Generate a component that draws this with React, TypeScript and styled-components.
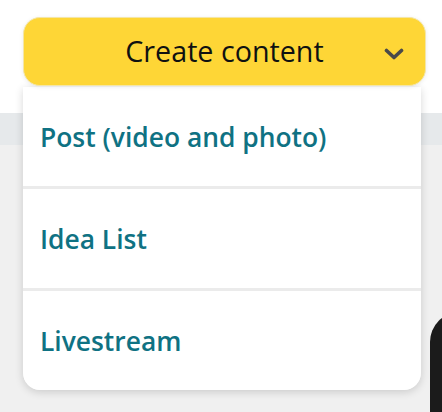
import React from "react";
import styled, { createGlobalStyle } from "styled-components";

const Global = createGlobalStyle`
  html, body { margin: 0; padding: 0; }
  body { background: #f0f0f0; font-family: "Open Sans", "Noto Sans", sans-serif; }
`;

const Page = styled.div`
  position: relative;
  width: 442px;
  height: 412px;
  overflow: hidden;
  background: #f0f0f0;
  display: flex;
  flex-direction: column;
`;

const Header = styled.div`
  height: 113px;
  background: #ffffff;
`;

const Band = styled.div`
  height: 32px;
  background: #e6e9eb;
`;

const Device = styled.div`
  position: absolute;
  left: 430px;
  top: 312px;
  width: 80px;
  height: 200px;
  border-radius: 30px;
  background: #1b1b1b;
`;

const Dropdown = styled.div`
  position: absolute;
  left: 23px;
  top: 17px;
  width: 403px;
  display: flex;
  flex-direction: column;
`;

const Trigger = styled.button`
  box-sizing: border-box;
  height: 69px;
  width: 403px;
  border: 1px solid #f4e6a6;
  border-radius: 17px;
  background: #fed636;
  box-shadow: 0 1px 4px rgba(0, 0, 0, 0.08);
  display: flex;
  align-items: center;
  justify-content: center;
  position: relative;
  padding: 0 0 2px 0;
  font-family: "Open Sans", "Noto Sans", sans-serif;
  font-size: 28.7px;
  font-weight: 400;
  color: #0f1111;
  cursor: pointer;
`;

const Chevron = styled.svg`
  position: absolute;
  right: 21px;
  top: 30px;
`;

const Menu = styled.div`
  margin-top: 1px;
  width: 398px;
  background: #ebebeb;
  border-radius: 0 0 17px 17px;
  box-shadow: 0 2px 8px rgba(0, 0, 0, 0.16);
  display: flex;
  flex-direction: column;
  gap: 3px;
  overflow: hidden;
`;

const Item = styled.div`
  height: 99px;
  background: #ffffff;
  display: flex;
  align-items: center;
  padding-left: 17px;
  font-size: 26.4px;
  font-weight: 600;
  color: #0f7283;
`;

export default function App() {
  return (
    <>
      <Global />
      <Page>
        <Header />
        <Band />
        <Device />
        <Dropdown>
          <Trigger>
            Create content
            <Chevron width="20" height="13" viewBox="0 0 20 13">
              <path d="M2.5 2.5 L10 9.5 L17.5 2.5" fill="none" stroke="#4a4a4a" strokeWidth="3.6" strokeLinecap="round" strokeLinejoin="round" />
            </Chevron>
          </Trigger>
          <Menu>
            <Item>Post (video and photo)</Item>
            <Item>Idea List</Item>
            <Item>Livestream</Item>
          </Menu>
        </Dropdown>
      </Page>
    </>
  );
}
